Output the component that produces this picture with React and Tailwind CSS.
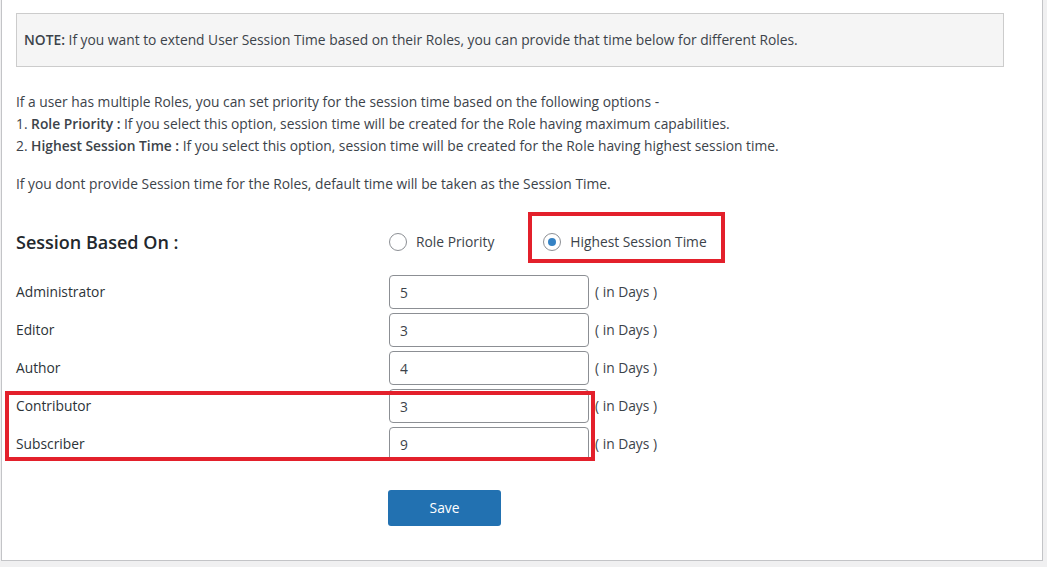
import React, { useState } from 'react';

const roles = [
  { name: 'Administrator', days: '5' },
  { name: 'Editor', days: '3' },
  { name: 'Author', days: '4' },
  { name: 'Contributor', days: '3' },
  { name: 'Subscriber', days: '9' },
];

const Radio = ({ checked, label, onClick }) => (
  <label onClick={onClick} className="flex items-center gap-[9px] cursor-pointer">
    <span className="w-[18px] h-[18px] rounded-full border border-[#8c8f94] bg-white flex items-center justify-center">
      {checked && <span className="w-[8px] h-[8px] rounded-full bg-[#3582c4]" />}
    </span>
    <span>{label}</span>
  </label>
);

const App = () => {
  const [mode, setMode] = useState('highest');
  const [values, setValues] = useState(roles.map((r) => r.days));

  return (
    <div className="min-h-screen bg-[#f0f0f1] text-[#3c434a] text-[13.8px]" style={{ fontFamily: '"Open Sans", sans-serif' }}>
      <div className="relative ml-[1px] w-[1042px] h-[561px] bg-white border-l border-r border-b border-[#c3c4c7] pl-[14px] pt-[13px]">
        {/* Note box */}
        <div className="w-[988px] h-[54px] bg-[#f5f5f5] border border-[#cccccc] flex items-center px-[7px]">
          <p><b className="font-semibold">NOTE:</b> If you want to extend User Session Time based on their Roles, you can provide that time below for different Roles.</p>
        </div>

        {/* Description */}
        <div className="mt-[24px] leading-[22px]">
          <p>If a user has multiple Roles, you can set priority for the session time based on the following options -</p>
          <p>1. <b className="font-semibold">Role Priority :</b> If you select this option, session time will be created for the Role having maximum capabilities.</p>
          <p>2. <b className="font-semibold">Highest Session Time :</b> If you select this option, session time will be created for the Role having highest session time.</p>
          <p className="mt-[16px]">If you dont provide Session time for the Roles, default time will be taken as the Session Time.</p>
        </div>

        {/* Session based on */}
        <div className="mt-[32px] flex items-center h-[30px]">
          <div className="w-[373px] text-[18px] font-semibold text-[#23282d]">Session Based On :</div>
          <Radio checked={mode === 'priority'} label="Role Priority" onClick={() => setMode('priority')} />
          <div className="relative ml-[49px]">
            <Radio checked={mode === 'highest'} label="Highest Session Time" onClick={() => setMode('highest')} />
            <div className="absolute -left-[15px] -right-[18px] -top-[20px] -bottom-[11px] border-[4px] border-[#e3202b] pointer-events-none" />
          </div>
        </div>

        {/* Roles */}
        <div className="mt-[18px] flex flex-col gap-[4px]">
          {roles.map((r, i) => (
            <div key={r.name} className="flex items-center h-[34px]">
              <div className="w-[373px] text-[#2c3338]">{r.name}</div>
              <input
                value={values[i]}
                onChange={(e) => {
                  const v = [...values];
                  v[i] = e.target.value;
                  setValues(v);
                }}
                className="w-[200px] h-[34px] border border-[#8c8f94] rounded-[4px] px-[10px] outline-none bg-white"
              />
              <span className="ml-[6px]">( in Days )</span>
            </div>
          ))}
        </div>

        {/* highlight around Contributor / Subscriber */}
        <div className="absolute left-[3px] top-[391px] w-[590px] h-[70px] border-[4px] border-[#e3202b] pointer-events-none" />

        <button className="mt-[29px] ml-[372px] w-[113px] h-[36px] bg-[#2271b1] text-white rounded-[3px]">
          Save
        </button>
      </div>
    </div>
  );
};

export default App;
